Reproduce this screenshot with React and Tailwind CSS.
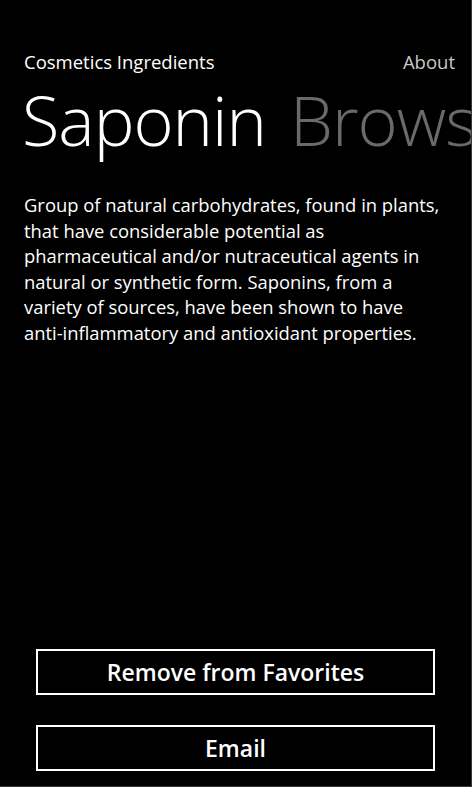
const App = () => {
  return (
    <div
      className="w-[472px] h-[787px] bg-black text-white overflow-hidden flex flex-col border-r border-b border-[#3a3a3a]"
      style={{ fontFamily: '"Open Sans", "Noto Sans", sans-serif' }}
    >
      <div className="flex items-baseline justify-between pl-[24px] pr-[16px] pt-[51px]">
        <span className="text-[18.5px] leading-[22px]">Cosmetics Ingredients</span>
        <span className="text-[18.5px] leading-[22px] text-[#c8c8c8]">About</span>
      </div>

      {/* pivot header: next pivot title is clipped on the right */}
      <div className="flex whitespace-nowrap pl-[22px] mt-[9px] text-[68.5px] leading-[76px] font-light tracking-[-1px]">
        <span>Saponin</span>
        <span className="ml-[24px] text-[#6a6a6a]">Browse</span>
      </div>

      <p className="pl-[24px] pr-[28px] mt-[34px] text-[18.4px] leading-[25.6px]">
        Group of natural carbohydrates, found in plants, that have considerable potential as
        pharmaceutical and/or nutraceutical agents in natural or synthetic form. Saponins, from a
        variety of sources, have been shown to have anti-inflammatory and antioxidant properties.
      </p>

      <div className="mt-auto flex flex-col gap-[30px] px-[36px] pb-[15px]">
        <button
          type="button"
          className="h-[46px] border-2 border-white text-[23px] font-semibold flex items-center justify-center"
        >
          Remove from Favorites
        </button>
        <button
          type="button"
          className="h-[46px] border-2 border-white text-[23px] font-semibold flex items-center justify-center"
        >
          Email
        </button>
      </div>
    </div>
  );
};

export default App;
